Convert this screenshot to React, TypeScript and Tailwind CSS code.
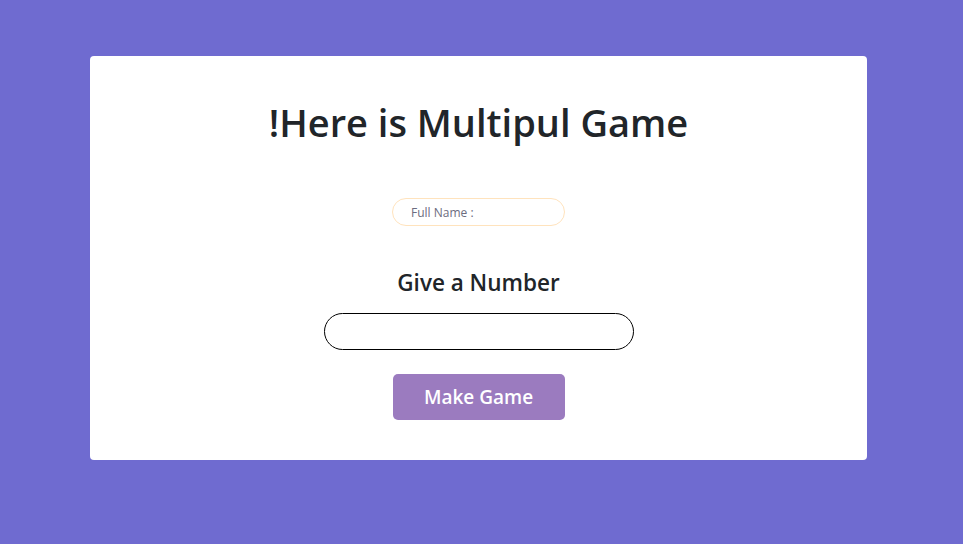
export default function App() {
  return (
    <div
      className="min-h-[544px] w-full bg-[#6f6bd0] pt-[56px]"
      style={{ fontFamily: '"Open Sans", "Noto Sans", sans-serif' }}
    >
      <div className="ml-[90px] w-[777px] h-[404px] rounded bg-white flex flex-col items-center">
        <h1 className="mt-[42px] text-[38px] leading-[48px] font-semibold text-[#212529]">
          !Here is Multipul Game
        </h1>
        <input
          type="text"
          placeholder="Full Name :"
          className="mt-[52px] h-[28px] w-[173px] rounded-full border border-[#ffe3bd] pl-[18px] text-[12px] text-[#555] placeholder:text-[#6c6c80] outline-none"
        />
        <h2 className="mt-[42px] text-[22.5px] leading-[30px] font-semibold text-[#212529]">
          Give a Number
        </h2>
        <input
          type="number"
          className="mt-[15px] h-[37px] w-[310px] rounded-full border border-black outline-none px-4"
        />
        <button className="mt-[24px] h-[46px] w-[172px] rounded-[5px] bg-[#9b7bbf] text-[19px] font-semibold text-white">
          Make Game
        </button>
      </div>
    </div>
  )
}
